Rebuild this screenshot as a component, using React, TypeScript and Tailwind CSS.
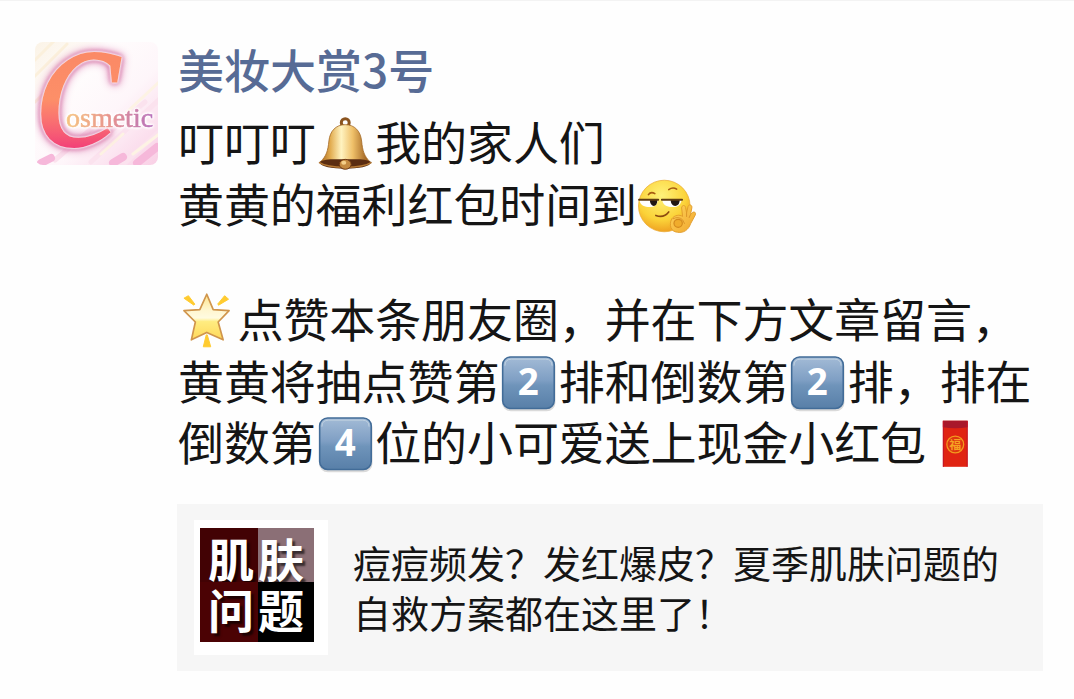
import React from 'react'

interface KeycapProps {
  digit: string
}

const Avatar: React.FC = () => (
  <div className="relative h-[123px] w-[123px] shrink-0 overflow-hidden rounded-lg font-['Liberation_Serif',serif] leading-none">
    <svg viewBox="0 0 123 123" className="h-full w-full">
      <defs>
        <linearGradient id="avatar-bg" x1="0" y1="0" x2="1" y2="1">
          <stop offset="0" stopColor="#fbf3e6" />
          <stop offset="0.3" stopColor="#fffdfd" />
          <stop offset="0.6" stopColor="#fef6fa" />
          <stop offset="1" stopColor="#f9cfe5" />
        </linearGradient>
      </defs>
      <rect width="123" height="123" fill="url(#avatar-bg)" />
      <g strokeLinecap="round" fill="none">
        <path d="M-4 22 20 -2M-4 38 32 2M0 60 42 18" stroke="#fbf0dc" strokeWidth="3" />
        <path d="M56 120 126 56M70 94 110 60M84 126 126 88M20 118 62 82" stroke="#fbe2ee" strokeWidth="5" />
        <path d="M92 70 124 40M66 112 88 92M98 112 124 92" stroke="#fdf3e4" strokeWidth="3" />
        <path d="M6 121 16 116M78 121 88 115M102 121 122 105" stroke="#f6b8da" strokeWidth="8" />
      </g>
    </svg>
    <span className="absolute top-[-63px] left-0 h-[200px] w-[110px] bg-linear-to-b from-[#fb8a66] from-40% via-[#fd8f68] via-60% to-[#f23d78] to-85% bg-clip-text text-[200px] text-transparent lowercase italic [filter:drop-shadow(0_0_1px_#fff)_drop-shadow(0_0_1px_#fff)_drop-shadow(0_0_2px_#c95a93)_drop-shadow(0_0_4px_#e08ab8)]">
      C
    </span>
    <span className="absolute top-[62px] left-[31px] bg-linear-to-r from-[#f6c47e] via-[#e8948e] to-[#b870bb] bg-clip-text text-[28px] text-transparent [-webkit-text-stroke:0.6px_transparent] [filter:drop-shadow(0_0_1px_#fff)_drop-shadow(0_0_1px_#fff)_drop-shadow(0_0_1px_#fff)]">
      osmetic
    </span>
  </div>
)

const Bell: React.FC = () => (
  <svg viewBox="0 0 60 60" className="h-[60px] w-[59.5px] shrink-0">
    <defs>
      <linearGradient id="bell-body" x1="0" y1="0" x2="1" y2="0">
        <stop offset="0" stopColor="#a8681c" />
        <stop offset="0.2" stopColor="#e2ac50" />
        <stop offset="0.42" stopColor="#fff3c0" />
        <stop offset="0.65" stopColor="#efc069" />
        <stop offset="1" stopColor="#8f4f12" />
      </linearGradient>
    </defs>
    <circle cx="29.500" cy="8.500" r="4" fill="none" stroke="#8a541f" strokeWidth="3" />
    <path d="M29.500 10.500C20 10.500 14 17 13 27C12 37 10.500 42 4.500 48C4 51 15 54 29.500 54S55 51 54.500 48C48.500 42 47 37 46 27C45 17 39 10.500 29.500 10.500Z" fill="url(#bell-body)" stroke="#a56a25" strokeWidth="0.8" />
    <path d="M3 48.500C9 44.500 19 45.500 29.500 45.500S50 44.500 56 48.500C54 53 43 55 29.500 55S5 53 3 48.500Z" fill="#5b2d12" />
    <path d="M3 48.500C9 52.500 18 53.500 29.500 53.500S50 52.500 56 48.500" fill="none" stroke="#b57935" strokeWidth="1.500" />
    <ellipse cx="29.500" cy="50.500" rx="6" ry="5" fill="#c48a40" stroke="#6e3913" />
    <ellipse cx="28" cy="49" rx="2.500" ry="2" fill="#f4cf88" />
  </svg>
)

const SmirkFace: React.FC = () => (
  <svg viewBox="0 0 60 60" className="h-[60px] w-[59.5px] shrink-0">
    <defs>
      <radialGradient id="face" cx="0.45" cy="0.3" r="0.72">
        <stop offset="0" stopColor="#fff27a" />
        <stop offset="0.65" stopColor="#fbd339" />
        <stop offset="1" stopColor="#ee9e20" />
      </radialGradient>
      <linearGradient id="hand" x1="0" y1="0" x2="1" y2="1">
        <stop offset="0" stopColor="#ffd65c" />
        <stop offset="1" stopColor="#f0a52c" />
      </linearGradient>
    </defs>
    <circle cx="27.500" cy="30" r="26" fill="url(#face)" stroke="#e9a72c" strokeWidth="0.7" />
    <path d="M11.500 18.500Q14 15 18 17.500M32 13.500Q36 10.500 40 13" fill="none" stroke="#a75c12" strokeWidth="1.600" strokeLinecap="round" />
    <path d="M2.500 24H21C20.500 30 16.500 31.500 11 31C6 30.500 3 28.500 2.500 24Z" fill="#fff" />
    <path d="M25.500 24H45C44 30 40 31.500 34 31C29 30.500 26 28.500 25.500 24Z" fill="#fff" />
    <path d="M13 24H20.500C20.500 28 19 30 17 30S13 27.500 13 24ZM34 24H43C43 28 41 30 38.500 30S34 27.500 34 24Z" fill="#221713" />
    <path d="M2 23.700H21.500M25 23.700H45.500" stroke="#5f3c12" strokeWidth="1.800" strokeLinecap="round" />
    <path d="M19 39.500Q27 42.500 32 36" fill="none" stroke="#8c4a10" strokeWidth="1.600" strokeLinecap="round" />
    <path d="M35 43C38 39 43 38.500 46 40.500L45 32C45 29 48.500 28.500 49 31.500L50 37L51.500 30.500C52.500 27.500 56 29 55.300 32L54 38.500L56 36.500C58.500 35 60 37.500 58.300 40L54 48C52 54 47 57.500 41 56.500C34 56 32 49 35 43Z" fill="url(#hand)" stroke="#e09a28" strokeWidth="0.9" />
    <ellipse cx="41.500" cy="47.500" rx="4.200" ry="4" fill="#f0ac2c" stroke="#d48a1e" strokeWidth="1.200" />
    <path d="M36 43Q42 40 46 44L48 48M50 37V41M54 38.500L52.500 42" fill="none" stroke="#d68f26" strokeWidth="0.9" />
  </svg>
)

const GlowingStar: React.FC = () => (
  <svg viewBox="0 0 60 60" className="h-[60px] w-[59.5px] shrink-0">
    <defs>
      <linearGradient id="star" x1="0" y1="0" x2="0" y2="1">
        <stop offset="0" stopColor="#ffe48a" />
        <stop offset="0.35" stopColor="#fff6d0" />
        <stop offset="0.52" stopColor="#fffbe0" />
        <stop offset="0.6" stopColor="#ffec80" />
        <stop offset="1" stopColor="#ffd85a" />
      </linearGradient>
    </defs>
    <path d="M6 7 10.500 4.500 17 13 16 14ZM47 4.500 51 8 41 14 40 13ZM25.500 56 28.500 44H29.500L33 56Z" fill="#ffcb30" stroke="#ffcb30" strokeLinejoin="round" />
    <path d="M29 3 35.500 18.500 51.500 19.500 40.500 31 45.500 49 29 41.500 13.500 49 17.500 31 6 19.500 22 18.500Z" fill="url(#star)" stroke="#d0954c" strokeWidth="1.700" strokeLinejoin="round" />
  </svg>
)

const Keycap: React.FC<KeycapProps> = ({ digit }) => (
  <svg viewBox="0 0 60 60" className="h-[60px] w-[59.5px] shrink-0">
    <defs>
      <linearGradient id="keycap" x1="0" y1="0" x2="0" y2="1">
        <stop offset="0" stopColor="#a3bbd6" />
        <stop offset="0.45" stopColor="#7f9fc4" />
        <stop offset="0.55" stopColor="#6f94ba" />
        <stop offset="1" stopColor="#587fa8" />
      </linearGradient>
    </defs>
    <rect x="3" y="4.500" width="54" height="54" rx="9" fill="#000" opacity="0.14" />
    <rect x="3.700" y="3.700" width="52" height="52" rx="8" fill="url(#keycap)" stroke="#426c98" strokeWidth="1.600" />
    <path d="M6 12.500Q6 6 12.500 6H47Q53.500 6 53.500 12.500" fill="none" stroke="#bfd0e0" strokeWidth="1" />
    <text
      x="29.500"
      y="42.500"
      textAnchor="middle"
      fontSize="37"
      fill="#fff"
      className="font-['Noto_Sans',sans-serif] font-bold"
    >
      {digit}
    </text>
  </svg>
)

const RedPacket: React.FC = () => (
  <svg viewBox="0 0 60 60" className="h-[60px] w-[59.5px] shrink-0">
    <rect x="17" y="6.500" width="25" height="46.500" fill="#e02412" />
    <path d="M17 6.500H42V13Q29.500 15 17 13Z" fill="#a9182a" />
    <path d="M17.500 7V53M41.500 7V53" stroke="#c11428" />
    <circle cx="29.500" cy="30.500" r="8.500" fill="#dd3610" stroke="#f39a1e" strokeWidth="1.300" />
    <text x="29.500" y="35" textAnchor="middle" fontSize="12" fill="#f6a323" className="font-['Noto_Sans_CJK_SC',sans-serif] font-bold">
      福
    </text>
  </svg>
)

const LinkThumb: React.FC = () => (
  <div className="h-[135px] w-[134px] shrink-0 bg-white pt-2 pl-1.5">
    <div className="grid h-[114px] w-[114px] grid-cols-[58px_56px] grid-rows-[54px_60px] text-[46px] leading-none font-bold text-white [text-shadow:3px_3px_2px_#0009]">
      <div className="flex items-center justify-end bg-[#420204] pt-1 pr-1">肌</div>
      <div className="flex items-center bg-[#8b6f76] pt-1">肤</div>
      <div className="flex items-center justify-end bg-[#4b0204] pr-1 pb-2">问</div>
      <div className="flex items-center bg-black pb-2">题</div>
    </div>
  </div>
)

const App: React.FC = () => {
  return (
    <div className="h-[699px] w-[1074px] overflow-hidden border-t border-[#f3f3f3] bg-[#fefefe] font-['Noto_Sans_CJK_SC',sans-serif] text-[#151515]">
      <div className="flex gap-5 pt-[41px] pl-[35px]">
        <Avatar />
        <div className="-ml-px w-[866px]">
          <h1 className="h-[72px] pl-px text-[46px] leading-[53px] font-medium whitespace-nowrap text-[#576b95]">
            美妆大赏3号
          </h1>

          <div className="pl-px text-[46px] leading-[53px] tracking-[-0.1px] whitespace-nowrap">
            <p className="flex h-[62px]">叮叮叮<Bell />我的家人们</p>
            <p className="flex h-[115px]">黄黄的福利红包时间到<SmirkFace /></p>
            <p className="flex h-[62px]"><GlowingStar />点赞本条朋友圈，并在下方文章留言，</p>
            <p className="flex h-[61px]">
              黄黄将抽点赞第<Keycap digit="2" />排和倒数第<Keycap digit="2" />排，排在
            </p>
            <p className="flex h-[90px]">
              倒数第<Keycap digit="4" />位的小可爱送上现金小红包<RedPacket />
            </p>
          </div>

          <a className="flex h-[167px] w-[866px] items-start bg-[#f6f6f6] pt-4 pl-[17px]">
            <LinkThumb />
            <p className="pt-[17px] pl-[25px] text-[38px] leading-[50px] whitespace-nowrap">
              痘痘频发？发红爆皮？夏季肌肤问题的
              <br />
              自救方案都在这里了！
            </p>
          </a>
        </div>
      </div>
    </div>
  )
}

export default App
